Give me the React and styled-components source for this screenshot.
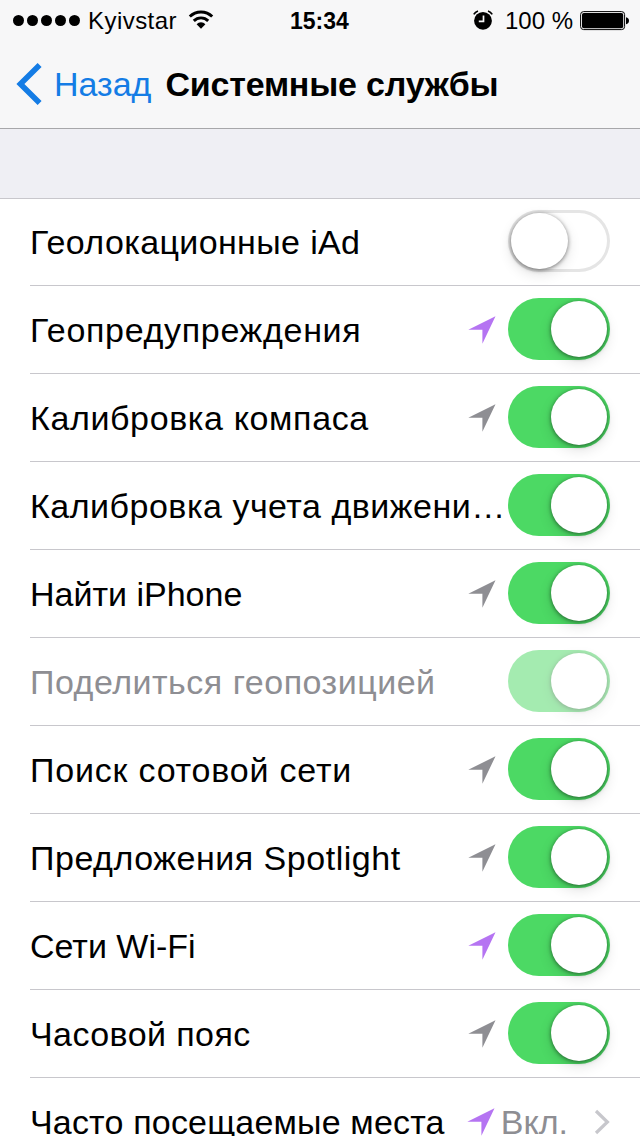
import React, { useState } from 'react'
import styled, { createGlobalStyle } from 'styled-components';

const GlobalStyle = createGlobalStyle`
        * {
            box-sizing: border-box;
        }
        body {
            margin: 0;
            background-color: #ffffff;
            color: #000000;
            font-family: "Liberation Sans", Arial, sans-serif;
        }
    `;

const Screen = styled.div`
        width: 640px;
        height: 1136px;
        overflow: hidden;
        display: flex;
        flex-direction: column;
        background-color: #efeff4;
    `;

const Header = styled.header`
        flex: none;
        height: 129px;
        background-color: #f7f7f8;
        border-bottom: 1px solid #a7a7aa;
    `;

const StatusBar = styled.div`
        height: 40px;
        padding: 0 10px 0 13px;
        display: grid;
        grid-template-columns: 277px auto 1fr;
        align-items: center;
    `;

const StatusSide = styled.div`
        display: flex;
        align-items: center;
        justify-content: ${({ $end }) => $end ? "flex-end" : "flex-start"};
    `;

const Signal = styled.div`
        display: flex;
        gap: 3px;
        margin-right: 8px;
    `;

const Dot = styled.span`
        width: 11px;
        height: 11px;
        border-radius: 50%;
        background-color: #000000;
    `;

const StatusText = styled.span`
        font-size: 24px;
        line-height: 40px;
        padding-top: 1px;
        letter-spacing: ${({ $spacing }) => $spacing || 0}px;
        white-space: pre;
    `;

const Time = styled(StatusText)`
        font-weight: 700;
        font-size: 23px;
    `;

const WifiIcon = styled.svg`
        margin-left: 11px;
        margin-bottom: 1px;
    `;

const AlarmIcon = styled.svg`
        margin-right: 12px;
        margin-bottom: 1px;
    `;

const BatteryIcon = styled.svg`
        margin-left: 7px;
    `;

const NavBar = styled.nav`
        height: 88px;
        padding-left: 16px;
        display: flex;
        align-items: center;
    `;

const Back = styled.button`
        border: none;
        padding: 0;
        background-color: transparent;
        color: #147ce5;
        font-family: inherit;
        font-size: 34px;
        line-height: 40px;
        display: flex;
        align-items: center;
        gap: 12px;
        cursor: pointer;
    `;

const Title = styled.h1`
        margin: 0 0 0 14px;
        font-size: 34px;
        line-height: 40px;
        font-weight: 700;
        letter-spacing: -0.2px;
        white-space: nowrap;
    `;

const List = styled.main`
        margin-top: 69px;
        background-color: #ffffff;
        box-shadow: inset 0 1px 0 #c8c7cc;
    `;

const Row = styled.div`
        height: 88px;
        margin-left: 30px;
        padding-right: 30px;
        border-bottom: 1px solid #c8c7cc;
        display: flex;
        align-items: center;
    `;

const Label = styled.div`
        flex: 1;
        min-width: 0;
        font-size: 34px;
        line-height: 40px;
        padding-top: 1px;
        letter-spacing: ${({ $spacing }) => $spacing || 0}px;
        color: ${({ $disabled }) => $disabled ? "#8e8e93" : "#000000"};
        white-space: nowrap;
    `;

const Arrow = styled.svg`
        flex: none;
        margin-right: ${({ $gap }) => $gap}px;
        fill: ${({ $active }) => $active ? "#b574f2" : "#8e8e93"};
    `;

const Switch = styled.button`
        flex: none;
        width: 102px;
        height: 62px;
        margin-bottom: 1px;
        padding: 0 3px;
        border: none;
        border-radius: 31px;
        display: flex;
        align-items: center;
        justify-content: ${({ $on }) => $on ? "flex-end" : "flex-start"};
        background-color: ${({ $on }) => $on ? "#4cd964" : "#ffffff"};
        box-shadow: ${({ $on }) => $on ? "none" : "inset 0 0 0 3px #e5e5e5"};
        opacity: ${({ disabled }) => disabled ? 0.5 : 1};
    `;

const Knob = styled.span`
        width: 56.5px;
        height: 56.5px;
        border-radius: 50%;
        background-color: #ffffff;
        box-shadow: 0 1px 4px rgba(0, 0, 0, 0.5), 0 5px 14px rgba(0, 0, 0, 0.12);
    `;

const Value = styled.span`
        margin-right: 26px;
        padding-top: 1px;
        font-size: 34px;
        line-height: 40px;
        color: #8e8e93;
    `;

const services = [
    { name: "Геолокационные iAd", on: false, spacing: 0.37 },
    { name: "Геопредупреждения", on: true, arrow: "recent", spacing: 0.68 },
    { name: "Калибровка компаса", on: true, arrow: "day", spacing: 0.62 },
    { name: "Калибровка учета движени…", on: true, spacing: 0.5 },
    { name: "Найти iPhone", on: true, arrow: "day", spacing: 0 },
    { name: "Поделиться геопозицией", on: true, disabled: true, spacing: 0.5 },
    { name: "Поиск сотовой сети", on: true, arrow: "day", spacing: 0.8 },
    { name: "Предложения Spotlight", on: true, arrow: "day", spacing: 0.52 },
    { name: "Сети Wi-Fi", on: true, arrow: "recent", spacing: 0 },
    { name: "Часовой пояс", on: true, arrow: "day", spacing: 0.42 },
];

const LocationArrow = ({ active, gap }) => (
    <Arrow width="28" height="28" viewBox="0 0 28 28" $active={active} $gap={gap}>
        <path d="M27.5 0.2 14.4 27.8V13.8H0.3Z" />
    </Arrow>
)

const ServiceRow = ({ service }) => {
    const [on, setOn] = useState(service.on);

    return (
        <Row>
            <Label $spacing={service.spacing} $disabled={service.disabled}>{service.name}</Label>
            {service.arrow && <LocationArrow active={service.arrow === "recent"} gap={12} />}
            <Switch $on={on} disabled={service.disabled} onClick={() => setOn(!on)}>
                <Knob />
            </Switch>
        </Row>
    )
}

const App = () => {
    return (
        <>
            <GlobalStyle />
            <Screen>
                <Header>
                    <StatusBar>
                        <StatusSide>
                            <Signal>
                                {[1, 2, 3, 4, 5].map((n) => <Dot key={n} />)}
                            </Signal>
                            <StatusText $spacing={0.45}>Kyivstar</StatusText>
                            <WifiIcon width="26" height="20" viewBox="0 0 26 20">
                                <path d="M1.8 6.6a15.8 15.8 0 0 1 22.4 0M5.8 10.9a10.2 10.2 0 0 1 14.4 0" fill="none" stroke="#000" strokeWidth="2.9" />
                                <path d="M8.6 14.2a6.2 6.2 0 0 1 8.8 0L13 18.8Z" />
                            </WifiIcon>
                        </StatusSide>
                        <Time>15:34</Time>
                        <StatusSide $end>
                            <AlarmIcon width="20" height="20" viewBox="0 0 20 20">
                                <circle cx="10" cy="10.8" r="8.9" />
                                <path d="M0.8 4.4A7.5 7.5 0 0 1 5 1M15 1A7.5 7.5 0 0 1 19.2 4.4" fill="none" stroke="#000" strokeWidth="1.7" />
                                <path d="M10.5 5.6v5.8H5.8" fill="none" stroke="#f7f7f8" strokeWidth="1.7" />
                            </AlarmIcon>
                            <StatusText>100 %</StatusText>
                            <BatteryIcon width="50" height="20" viewBox="0 0 50 20">
                                <rect x="0.6" y="0.6" width="44" height="18" rx="3" fill="none" stroke="#000" />
                                <rect x="2" y="2" width="41.2" height="15.2" rx="1.8" />
                                <path d="M46 6.3c4 .7 4 6.3 0 7Z" />
                            </BatteryIcon>
                        </StatusSide>
                    </StatusBar>
                    <NavBar>
                        <Back>
                            <svg width="26" height="42" viewBox="0 0 26 42">
                                <path d="M23.6 2 4.4 21 23.6 40" fill="none" stroke="currentColor" strokeWidth="5.6" />
                            </svg>
                            Назад
                        </Back>
                        <Title>Системные службы</Title>
                    </NavBar>
                </Header>
                <List>
                    {services.map((service) => <ServiceRow key={service.name} service={service} />)}
                    <Row>
                        <Label $spacing={0.18}>Часто посещаемые места</Label>
                        <LocationArrow active gap={6} />
                        <Value>Вкл.</Value>
                        <svg width="16" height="26" viewBox="0 0 16 26">
                            <path d="M2 2 13.4 13 2 24" fill="none" stroke="#c7c7cc" strokeWidth="3.2" />
                        </svg>
                    </Row>
                </List>
            </Screen>
        </>
    )
}

export default App;
